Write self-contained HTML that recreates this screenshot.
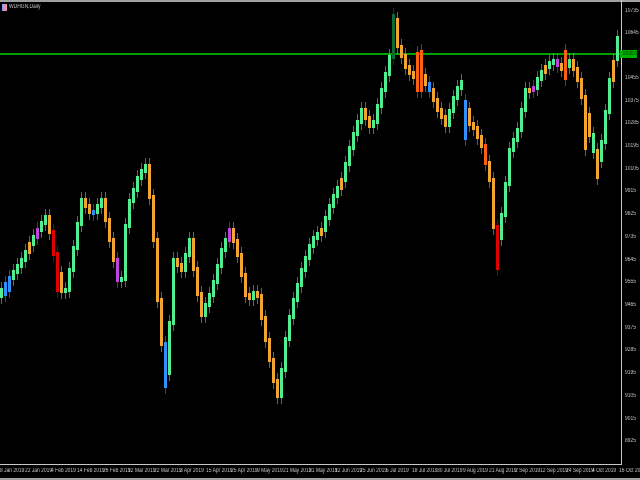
<!DOCTYPE html>
<html><head><meta charset="utf-8"><style>
html,body{margin:0;padding:0;background:#000;width:640px;height:480px;overflow:hidden;font-family:"Liberation Sans",sans-serif;position:relative}
.t{position:absolute;color:#c8c8c8;font-size:6px;white-space:nowrap;transform-origin:0 0;transform:scaleX(0.82)}
#ch i{position:absolute;width:3px;display:block}
#ch i::before{content:"";position:absolute;left:1px;width:1px;top:-6px;bottom:-6px;background:inherit;opacity:.55}
.g{background:#50ee90}.o{background:#f4a431}.r{background:#e00000}.b{background:#3090ff}.p{background:#c040e0}.f{background:#ff6010}.d{background:#0c6a34}
.k{position:absolute;background:#c8c8c8}
</style></head><body>
<div style="position:absolute;left:0;top:0;width:640px;height:2px;background:#a0a0a0"></div>
<div style="position:absolute;left:0;top:478px;width:640px;height:2px;background:#a0a0a0"></div>
<div style="position:absolute;left:2px;top:4px;width:5px;height:7px;background:linear-gradient(90deg,#88a0ff,#ff9090)"></div>
<div class="t" style="left:9px;top:4px">WDHGN,Daily</div>
<div style="position:absolute;left:0;top:53px;width:621px;height:2px;background:#00a000"></div>
<div id="ch">
<i class="g" style="left:0px;top:288px;height:10px"></i>
<i class="b" style="left:4px;top:282px;height:14px"></i>
<i class="b" style="left:8px;top:276px;height:16px"></i>
<i class="g" style="left:12px;top:270px;height:10px"></i>
<i class="g" style="left:16px;top:264px;height:10px"></i>
<i class="g" style="left:20px;top:258px;height:10px"></i>
<i class="g" style="left:24px;top:250px;height:12px"></i>
<i class="o" style="left:28px;top:242px;height:12px"></i>
<i class="g" style="left:32px;top:235px;height:11px"></i>
<i class="p" style="left:36px;top:228px;height:11px"></i>
<i class="g" style="left:40px;top:221px;height:11px"></i>
<i class="g" style="left:44px;top:215px;height:10px"></i>
<i class="o" style="left:48px;top:215px;height:19px"></i>
<i class="r" style="left:52px;top:230px;height:26px"></i>
<i class="r" style="left:56px;top:252px;height:40px"></i>
<i class="o" style="left:60px;top:272px;height:21px"></i>
<i class="g" style="left:64px;top:288px;height:5px"></i>
<i class="g" style="left:68px;top:268px;height:24px"></i>
<i class="g" style="left:72px;top:246px;height:26px"></i>
<i class="g" style="left:76px;top:222px;height:28px"></i>
<i class="g" style="left:80px;top:198px;height:28px"></i>
<i class="o" style="left:84px;top:198px;height:10px"></i>
<i class="o" style="left:88px;top:204px;height:10px"></i>
<i class="b" style="left:92px;top:210px;height:5px"></i>
<i class="g" style="left:96px;top:204px;height:10px"></i>
<i class="g" style="left:100px;top:198px;height:10px"></i>
<i class="o" style="left:104px;top:198px;height:24px"></i>
<i class="o" style="left:108px;top:218px;height:24px"></i>
<i class="o" style="left:112px;top:238px;height:24px"></i>
<i class="p" style="left:116px;top:258px;height:24px"></i>
<i class="g" style="left:120px;top:277px;height:5px"></i>
<i class="g" style="left:124px;top:224px;height:57px"></i>
<i class="g" style="left:128px;top:199px;height:29px"></i>
<i class="g" style="left:132px;top:188px;height:15px"></i>
<i class="g" style="left:136px;top:176px;height:16px"></i>
<i class="g" style="left:140px;top:169px;height:11px"></i>
<i class="g" style="left:144px;top:164px;height:9px"></i>
<i class="o" style="left:148px;top:164px;height:35px"></i>
<i class="o" style="left:152px;top:195px;height:47px"></i>
<i class="o" style="left:156px;top:238px;height:64px"></i>
<i class="o" style="left:160px;top:298px;height:48px"></i>
<i class="b" style="left:164px;top:342px;height:46px"></i>
<i class="g" style="left:168px;top:321px;height:54px"></i>
<i class="g" style="left:172px;top:258px;height:67px"></i>
<i class="o" style="left:176px;top:258px;height:9px"></i>
<i class="o" style="left:180px;top:263px;height:9px"></i>
<i class="g" style="left:184px;top:253px;height:19px"></i>
<i class="g" style="left:188px;top:238px;height:19px"></i>
<i class="o" style="left:192px;top:238px;height:33px"></i>
<i class="o" style="left:196px;top:267px;height:29px"></i>
<i class="o" style="left:200px;top:292px;height:25px"></i>
<i class="g" style="left:204px;top:303px;height:14px"></i>
<i class="g" style="left:208px;top:293px;height:14px"></i>
<i class="g" style="left:212px;top:280px;height:17px"></i>
<i class="g" style="left:216px;top:264px;height:20px"></i>
<i class="g" style="left:220px;top:248px;height:20px"></i>
<i class="g" style="left:224px;top:238px;height:14px"></i>
<i class="p" style="left:228px;top:228px;height:14px"></i>
<i class="o" style="left:232px;top:228px;height:15px"></i>
<i class="o" style="left:236px;top:239px;height:18px"></i>
<i class="o" style="left:240px;top:253px;height:24px"></i>
<i class="o" style="left:244px;top:273px;height:24px"></i>
<i class="o" style="left:248px;top:293px;height:7px"></i>
<i class="g" style="left:252px;top:291px;height:9px"></i>
<i class="o" style="left:256px;top:291px;height:7px"></i>
<i class="o" style="left:260px;top:294px;height:26px"></i>
<i class="o" style="left:264px;top:316px;height:26px"></i>
<i class="o" style="left:268px;top:338px;height:24px"></i>
<i class="o" style="left:272px;top:358px;height:25px"></i>
<i class="o" style="left:276px;top:379px;height:19px"></i>
<i class="g" style="left:280px;top:368px;height:30px"></i>
<i class="g" style="left:284px;top:337px;height:35px"></i>
<i class="g" style="left:288px;top:315px;height:26px"></i>
<i class="g" style="left:292px;top:298px;height:21px"></i>
<i class="g" style="left:296px;top:283px;height:19px"></i>
<i class="g" style="left:300px;top:268px;height:19px"></i>
<i class="g" style="left:304px;top:256px;height:16px"></i>
<i class="g" style="left:308px;top:244px;height:16px"></i>
<i class="g" style="left:312px;top:236px;height:12px"></i>
<i class="g" style="left:316px;top:232px;height:8px"></i>
<i class="o" style="left:320px;top:228px;height:8px"></i>
<i class="g" style="left:324px;top:216px;height:16px"></i>
<i class="g" style="left:328px;top:204px;height:16px"></i>
<i class="g" style="left:332px;top:194px;height:14px"></i>
<i class="g" style="left:336px;top:186px;height:12px"></i>
<i class="o" style="left:340px;top:178px;height:12px"></i>
<i class="g" style="left:344px;top:162px;height:20px"></i>
<i class="g" style="left:348px;top:146px;height:20px"></i>
<i class="g" style="left:352px;top:132px;height:18px"></i>
<i class="g" style="left:356px;top:120px;height:16px"></i>
<i class="g" style="left:360px;top:108px;height:16px"></i>
<i class="o" style="left:364px;top:108px;height:12px"></i>
<i class="o" style="left:368px;top:116px;height:12px"></i>
<i class="g" style="left:372px;top:120px;height:8px"></i>
<i class="g" style="left:376px;top:104px;height:20px"></i>
<i class="g" style="left:380px;top:88px;height:20px"></i>
<i class="g" style="left:384px;top:72px;height:20px"></i>
<i class="g" style="left:388px;top:55px;height:21px"></i>
<i class="d" style="left:392px;top:14px;height:45px"></i>
<i class="o" style="left:396px;top:18px;height:30px"></i>
<i class="o" style="left:400px;top:45px;height:13px"></i>
<i class="o" style="left:404px;top:54px;height:15px"></i>
<i class="o" style="left:408px;top:65px;height:10px"></i>
<i class="o" style="left:412px;top:71px;height:8px"></i>
<i class="f" style="left:416px;top:52px;height:40px"></i>
<i class="f" style="left:420px;top:50px;height:42px"></i>
<i class="o" style="left:424px;top:74px;height:12px"></i>
<i class="b" style="left:428px;top:82px;height:10px"></i>
<i class="o" style="left:432px;top:88px;height:14px"></i>
<i class="o" style="left:436px;top:98px;height:14px"></i>
<i class="o" style="left:440px;top:108px;height:11px"></i>
<i class="o" style="left:444px;top:115px;height:12px"></i>
<i class="g" style="left:448px;top:109px;height:18px"></i>
<i class="g" style="left:452px;top:96px;height:17px"></i>
<i class="g" style="left:456px;top:86px;height:14px"></i>
<i class="g" style="left:460px;top:80px;height:10px"></i>
<i class="b" style="left:464px;top:100px;height:40px"></i>
<i class="o" style="left:468px;top:108px;height:18px"></i>
<i class="o" style="left:472px;top:122px;height:8px"></i>
<i class="o" style="left:476px;top:126px;height:13px"></i>
<i class="o" style="left:480px;top:135px;height:13px"></i>
<i class="f" style="left:484px;top:144px;height:21px"></i>
<i class="o" style="left:488px;top:161px;height:21px"></i>
<i class="o" style="left:492px;top:178px;height:51px"></i>
<i class="r" style="left:496px;top:225px;height:45px"></i>
<i class="g" style="left:500px;top:213px;height:27px"></i>
<i class="g" style="left:504px;top:182px;height:35px"></i>
<i class="g" style="left:508px;top:148px;height:38px"></i>
<i class="g" style="left:512px;top:138px;height:14px"></i>
<i class="g" style="left:516px;top:128px;height:14px"></i>
<i class="g" style="left:520px;top:108px;height:24px"></i>
<i class="g" style="left:524px;top:88px;height:24px"></i>
<i class="o" style="left:528px;top:88px;height:5px"></i>
<i class="p" style="left:532px;top:86px;height:6px"></i>
<i class="g" style="left:536px;top:77px;height:13px"></i>
<i class="g" style="left:540px;top:70px;height:11px"></i>
<i class="o" style="left:544px;top:65px;height:9px"></i>
<i class="g" style="left:548px;top:61px;height:8px"></i>
<i class="g" style="left:552px;top:59px;height:6px"></i>
<i class="p" style="left:556px;top:59px;height:8px"></i>
<i class="o" style="left:560px;top:63px;height:8px"></i>
<i class="f" style="left:564px;top:50px;height:30px"></i>
<i class="g" style="left:568px;top:59px;height:9px"></i>
<i class="o" style="left:572px;top:59px;height:12px"></i>
<i class="o" style="left:576px;top:67px;height:15px"></i>
<i class="o" style="left:580px;top:78px;height:21px"></i>
<i class="o" style="left:584px;top:95px;height:55px"></i>
<i class="o" style="left:588px;top:113px;height:24px"></i>
<i class="g" style="left:592px;top:133px;height:20px"></i>
<i class="o" style="left:596px;top:149px;height:30px"></i>
<i class="g" style="left:600px;top:140px;height:22px"></i>
<i class="g" style="left:604px;top:110px;height:34px"></i>
<i class="g" style="left:608px;top:78px;height:36px"></i>
<i class="o" style="left:612px;top:60px;height:22px"></i>
<i class="g" style="left:616px;top:36px;height:25px"></i>
</div>
<div class="k" style="left:621px;top:0;width:1px;height:465px"></div>
<div class="k" style="left:0;top:464px;width:622px;height:1px"></div>
<div style="position:absolute;left:620px;top:50px;width:17px;height:8px;background:#00b000"></div>
<div class="t" style="left:622px;top:51px;color:#003000;font-size:5px">10530.00</div>
<div class="t" style="left:625px;top:8px">10735</div>
<div class="t" style="left:625px;top:30px">10645</div>
<div class="t" style="left:625px;top:75px">10455</div>
<div class="t" style="left:625px;top:98px">10375</div>
<div class="t" style="left:625px;top:120px">10285</div>
<div class="t" style="left:625px;top:143px">10195</div>
<div class="t" style="left:625px;top:166px">10105</div>
<div class="t" style="left:625px;top:188px">9915</div>
<div class="t" style="left:625px;top:211px">9825</div>
<div class="t" style="left:625px;top:234px">9735</div>
<div class="t" style="left:625px;top:257px">9645</div>
<div class="t" style="left:625px;top:279px">9555</div>
<div class="t" style="left:625px;top:302px">9465</div>
<div class="t" style="left:625px;top:325px">9375</div>
<div class="t" style="left:625px;top:347px">9285</div>
<div class="t" style="left:625px;top:370px">9195</div>
<div class="t" style="left:625px;top:393px">9105</div>
<div class="t" style="left:625px;top:416px">9015</div>
<div class="t" style="left:625px;top:438px">8925</div>
<div class="t" style="left:0px;top:468px">8 Jan 2019</div>
<div class="t" style="left:25px;top:468px">22 Jan 2019</div>
<div class="t" style="left:51px;top:468px">4 Feb 2019</div>
<div class="t" style="left:77px;top:468px">14 Feb 2019</div>
<div class="t" style="left:103px;top:468px">26 Feb 2019</div>
<div class="t" style="left:128px;top:468px">12 Mar 2019</div>
<div class="t" style="left:154px;top:468px">22 Mar 2019</div>
<div class="t" style="left:180px;top:468px">3 Apr 2019</div>
<div class="t" style="left:206px;top:468px">15 Apr 2019</div>
<div class="t" style="left:231px;top:468px">25 Apr 2019</div>
<div class="t" style="left:257px;top:468px">9 May 2019</div>
<div class="t" style="left:283px;top:468px">21 May 2019</div>
<div class="t" style="left:309px;top:468px">31 May 2019</div>
<div class="t" style="left:335px;top:468px">12 Jun 2019</div>
<div class="t" style="left:360px;top:468px">25 Jun 2019</div>
<div class="t" style="left:386px;top:468px">5 Jul 2019</div>
<div class="t" style="left:412px;top:468px">18 Jul 2019</div>
<div class="t" style="left:437px;top:468px">30 Jul 2019</div>
<div class="t" style="left:463px;top:468px">9 Aug 2019</div>
<div class="t" style="left:489px;top:468px">21 Aug 2019</div>
<div class="t" style="left:515px;top:468px">2 Sep 2019</div>
<div class="t" style="left:540px;top:468px">12 Sep 2019</div>
<div class="t" style="left:566px;top:468px">24 Sep 2019</div>
<div class="t" style="left:592px;top:468px">4 Oct 2019</div>
<div class="t" style="left:619px;top:468px">16 Oct 2019</div>
</body></html>
